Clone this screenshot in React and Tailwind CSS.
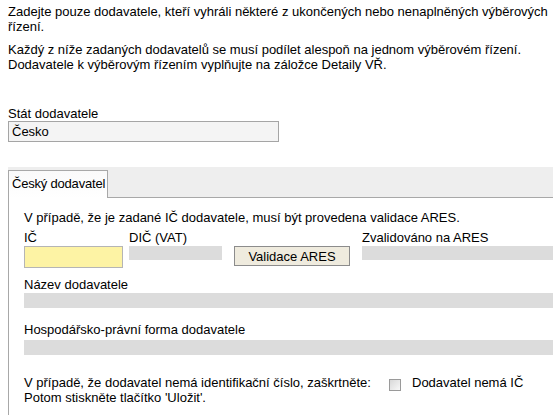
export default function App() {
  return (
    <div className="w-[553px] h-[415px] overflow-hidden bg-white text-black font-['Liberation_Sans',Arial,sans-serif] text-[13px] leading-[15px] pl-2 pt-1">
      <p>Zadejte pouze dodavatele, kteří vyhráli některé z ukončených nebo nenaplněných výběrových řízení.</p>
      <p className="mt-2">
        Každý z níže zadaných dodavatelů se musí podílet alespoň na jednom výběrovém řízení.
        <br />
        Dodavatele k výběrovým řízením vyplňujte na záložce Detaily VŘ.
      </p>

      {/* Stát */}
      <div className="mt-[34px]">
        <div>Stát dodavatele</div>
        <div className="w-[271px] h-[21px] border border-[#a5a5a5] bg-[#f4f4f4] px-[3px] flex items-center">Česko</div>
      </div>

      {/* Tabs */}
      <div className="mt-[25px] h-[31px] bg-[#eeeeee] border-b border-[#a8a8a8] flex items-end">
        <div className="h-[28px] -mb-px border border-b-0 border-[#a8a8a8] bg-gradient-to-b from-[#fafafa] to-white pl-[3px] pr-[2px] pt-[5px] whitespace-nowrap tracking-[-0.2px]">
          Český dodavatel
        </div>
      </div>

      {/* Panel */}
      <div className="border-l border-[#a8a8a8] pl-[15px] pt-[12px] h-[300px]">
        <div>V případě, že je zadané IČ dodavatele, musí být provedena validace ARES.</div>
        <div className="mt-[5px] flex">
          <div className="w-[105px] shrink-0">
            <div>IČ</div>
            <div className="mt-px w-[99px] h-[22px] border border-[#b5b5b5] bg-[#fdf3a4]" />
          </div>
          <div className="w-[105px] shrink-0">
            <div>DIČ (VAT)</div>
            <div className="mt-px w-[93px] h-[14px] bg-[#dcdcdc]" />
          </div>
          <div className="w-[128px] shrink-0 pt-[16px]">
            <div className="w-[116px] h-[20px] border border-[#8c8c8c] bg-[#efebde] flex items-center justify-center">Validace ARES</div>
          </div>
          <div className="flex-1">
            <div className="whitespace-nowrap">Zvalidováno na ARES</div>
            <div className="mt-px h-[14px] bg-[#dcdcdc]" />
          </div>
        </div>

        <div className="mt-[9px]">Název dodavatele</div>
        <div className="mt-[1px] h-[15px] bg-[#dcdcdc]" />

        <div className="mt-[14px]">Hospodářsko-právní forma dodavatele</div>
        <div className="mt-[3px] h-[15px] bg-[#dcdcdc]" />

        <div className="mt-[20px] flex items-start">
          <div className="w-[365px] shrink-0">
            V případě, že dodavatel nemá identifikační číslo, zaškrtněte:
            <br />
            Potom stiskněte tlačítko 'Uložit'.
          </div>
          <div className="mt-[4px] w-[12px] h-[12px] border border-[#9a9a9a] bg-gradient-to-br from-[#d8d8d8] to-[#f8f8f8]" />
          <div className="ml-[11px]">Dodavatel nemá IČ</div>
        </div>
      </div>
    </div>
  );
}
